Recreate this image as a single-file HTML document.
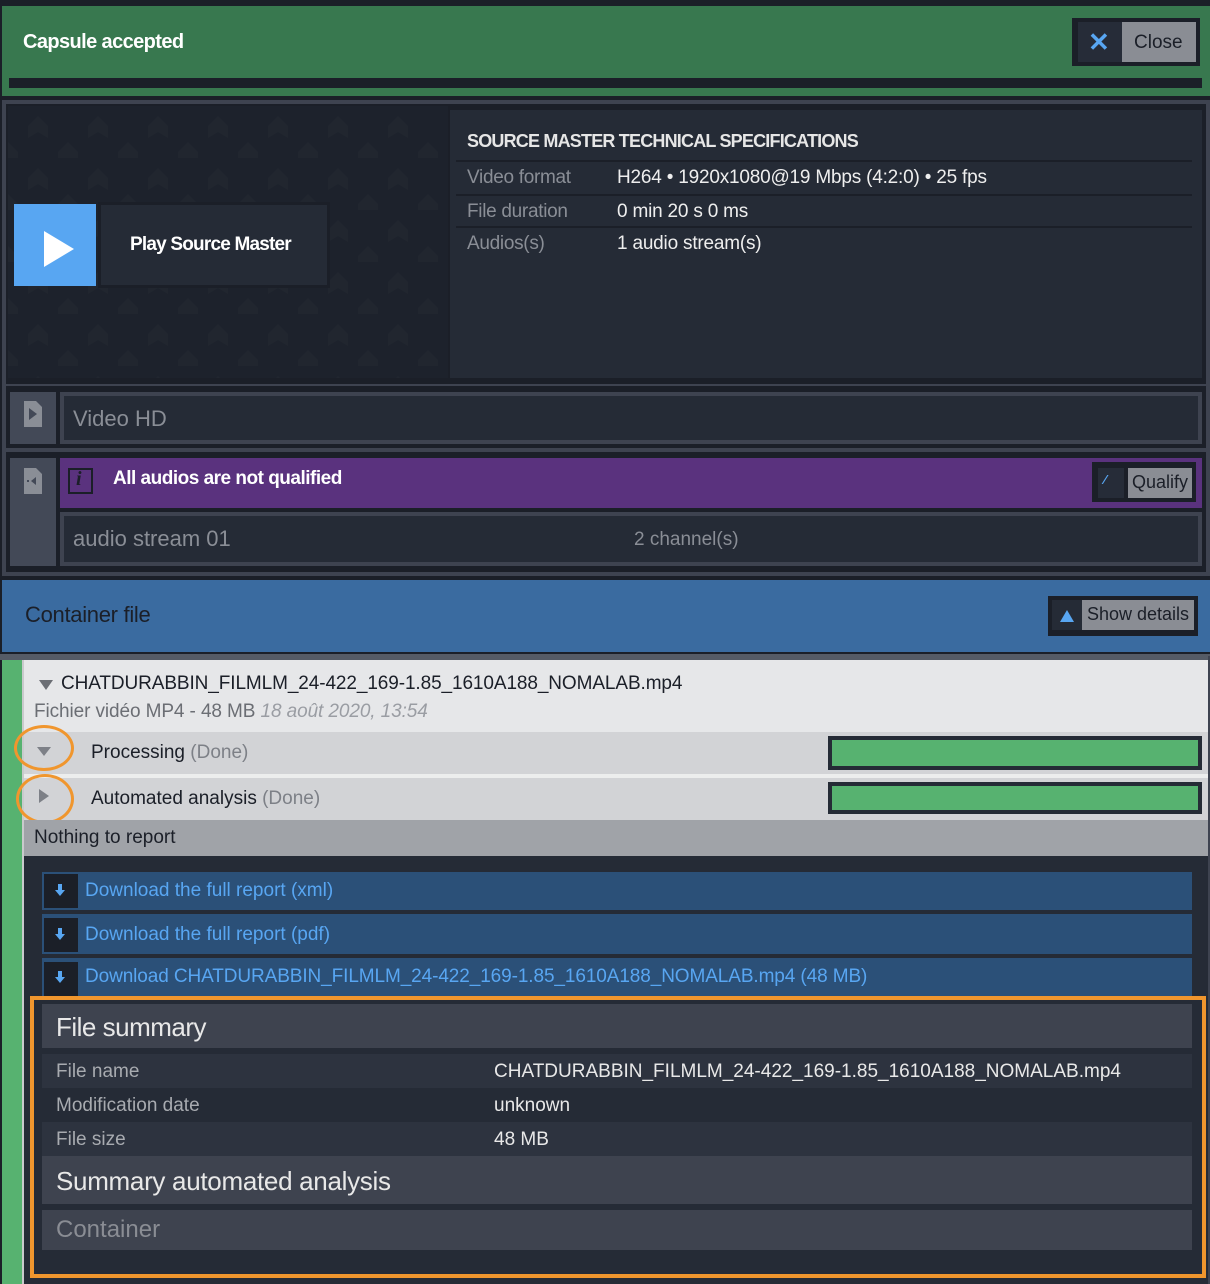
<!DOCTYPE html>
<html><head><meta charset="utf-8"><style>
*{margin:0;padding:0;box-sizing:border-box}
body{width:1210px;height:1284px;background:#1b1f28;position:relative;overflow:hidden;font-family:"Liberation Sans",sans-serif}
.a{position:absolute}
.t{position:absolute;white-space:nowrap}
</style></head><body>
<!-- header -->
<div class="a" style="left:2px;top:6px;width:1208px;height:90px;background:#38784f"></div>
<div class="a" style="left:9px;top:78px;width:1193px;height:10px;background:#1b1f28"></div>
<div class="t" style="left:23px;top:31px;font-size:20px;color:#fff;letter-spacing:-0.6px;font-weight:bold">Capsule accepted</div>
<div class="a" style="left:1072px;top:18px;width:128px;height:48px;background:#1b1f28"></div>
<div class="a" style="left:1078px;top:22px;width:44px;height:40px;background:#262c38"></div>
<div class="t" style="left:1088px;top:27px;font-size:26px;color:#58a6f2;font-weight:bold">✕</div>
<div class="a" style="left:1122px;top:22px;width:74px;height:40px;background:#8a8d94"></div>
<div class="t" style="left:1134px;top:32px;font-size:19px;color:#1b1f28">Close</div>

<!-- main panel -->
<div class="a" style="left:2px;top:100px;width:1208px;height:476px;background:#3e4350"></div>
<div class="a" style="left:6px;top:104px;width:1200px;height:280px;background:#1b1f28"></div>
<svg class="a" style="left:8px;top:106px" width="440" height="272">
<defs><pattern id="p" width="60" height="52" patternUnits="userSpaceOnUse">
<rect width="60" height="52" fill="#1d222c"/>
<path d="M30 10 L40 20 L40 32 L30 26 L20 32 L20 20Z M0 36 L10 46 L10 52 L0 52Z M60 36 L50 46 L50 52 L60 52Z" fill="#21262f"/>
</pattern></defs>
<rect width="440" height="272" fill="url(#p)"/></svg>
<div class="a" style="left:450px;top:110px;width:752px;height:268px;background:#252b36"></div>
<div class="a" style="left:14px;top:204px;width:82px;height:82px;background:#58a6f2"></div>
<svg class="a" style="left:42px;top:229px" width="34" height="40"><path d="M2 2 L32 20 L2 38Z" fill="#fff"/></svg>
<div class="a" style="left:98px;top:202px;width:232px;height:86px;background:#1b1f28"></div>
<div class="a" style="left:101px;top:205px;width:226px;height:80px;background:#252b36"></div>
<div class="t" style="left:130px;top:234px;font-size:19px;color:#fff;letter-spacing:-0.8px;font-weight:bold">Play Source Master</div>

<div class="t" style="left:467px;top:131px;font-size:18px;color:#e6e6e6;letter-spacing:-0.8px;font-weight:bold">SOURCE MASTER TECHNICAL SPECIFICATIONS</div>
<div class="a" style="left:456px;top:160px;width:736px;height:2px;background:#1b1f28"></div>
<div class="a" style="left:456px;top:194px;width:736px;height:2px;background:#1b1f28"></div>
<div class="a" style="left:456px;top:226px;width:736px;height:2px;background:#1b1f28"></div>
<div class="t" style="left:467px;top:167px;font-size:19px;color:#8a8e96;letter-spacing:-0.3px">Video format</div>
<div class="t" style="left:617px;top:167px;font-size:19px;color:#eee;letter-spacing:-0.2px">H264 • 1920x1080@19 Mbps (4:2:0) • 25 fps</div>
<div class="t" style="left:467px;top:201px;font-size:19px;color:#8a8e96;letter-spacing:-0.3px">File duration</div>
<div class="t" style="left:617px;top:201px;font-size:19px;color:#eee;letter-spacing:-0.2px">0 min 20 s 0 ms</div>
<div class="t" style="left:467px;top:233px;font-size:19px;color:#8a8e96;letter-spacing:-0.3px">Audios(s)</div>
<div class="t" style="left:617px;top:233px;font-size:19px;color:#eee;letter-spacing:-0.2px">1 audio stream(s)</div>

<!-- Video HD -->
<div class="a" style="left:6px;top:386px;width:1200px;height:62px;background:#1b1f28"></div>
<div class="a" style="left:10px;top:392px;width:46px;height:52px;background:#434957"></div>
<svg class="a" style="left:24px;top:401px" width="18" height="26"><path d="M0 0 H12 L18 6 V26 H0Z" fill="#8a8e96"/><path d="M5 7 L13 13 L5 19Z" fill="#434957"/></svg>
<div class="a" style="left:60px;top:392px;width:1142px;height:52px;background:#3e4350"></div>
<div class="a" style="left:64px;top:396px;width:1134px;height:44px;background:#252b36"></div>
<div class="t" style="left:73px;top:406px;font-size:22px;color:#8a8e96">Video HD</div>

<!-- audio -->
<div class="a" style="left:6px;top:452px;width:1200px;height:120px;background:#1b1f28"></div>
<div class="a" style="left:10px;top:458px;width:46px;height:108px;background:#434957"></div>
<svg class="a" style="left:24px;top:468px" width="18" height="26"><path d="M0 0 H12 L18 6 V26 H0Z" fill="#8a8e96"/><path d="M12 9 L7 13 L12 17Z M3 12h2v2h-2z" fill="#434957"/></svg>
<div class="a" style="left:60px;top:458px;width:1142px;height:50px;background:#5a327e"></div>
<div class="a" style="left:68px;top:468px;width:25px;height:26px;border:2px solid #1b1f28"></div>
<div class="t" style="left:76px;top:468px;font-size:20px;color:#1b1f28;font-family:'Liberation Serif',serif;font-style:italic;font-weight:bold">i</div>
<div class="t" style="left:113px;top:468px;font-size:19px;color:#fff;letter-spacing:-0.5px;font-weight:bold">All audios are not qualified</div>
<div class="a" style="left:1092px;top:462px;width:104px;height:40px;background:#1b1f28"></div>
<div class="a" style="left:1098px;top:468px;width:26px;height:30px;background:#262c38"></div>
<div class="t" style="left:1104px;top:472px;font-size:13px;color:#58a6f2;font-weight:bold">⁄</div>
<div class="a" style="left:1128px;top:468px;width:64px;height:30px;background:#8a8d94"></div>
<div class="t" style="left:1132px;top:472px;font-size:18px;color:#1b1f28">Qualify</div>
<div class="a" style="left:60px;top:512px;width:1142px;height:54px;background:#3e4350"></div>
<div class="a" style="left:64px;top:516px;width:1134px;height:46px;background:#252b36"></div>
<div class="t" style="left:73px;top:526px;font-size:22px;color:#8a8e96">audio stream 01</div>
<div class="t" style="left:634px;top:529px;font-size:19px;color:#8a8e96">2 channel(s)</div>

<!-- container header -->
<div class="a" style="left:2px;top:580px;width:1208px;height:72px;background:#3a6ba0"></div>
<div class="t" style="left:25px;top:602px;font-size:22px;color:#1b1f28;letter-spacing:-0.3px">Container file</div>
<div class="a" style="left:1048px;top:596px;width:150px;height:40px;background:#1b1f28"></div>
<div class="a" style="left:1052px;top:600px;width:30px;height:30px;background:#252b36"></div>
<svg class="a" style="left:1060px;top:610px" width="14" height="12"><path d="M7 0 L14 12 H0Z" fill="#58a6f2"/></svg>
<div class="a" style="left:1082px;top:600px;width:112px;height:30px;background:#8a8d94"></div>
<div class="t" style="left:1087px;top:604px;font-size:18px;color:#1b1f28">Show details</div>
<div class="a" style="left:0;top:654px;width:1210px;height:6px;background:#555b66"></div>

<!-- file area -->
<div class="a" style="left:2px;top:660px;width:20px;height:624px;background:#57b270"></div>
<div class="a" style="left:22px;top:660px;width:2px;height:624px;background:#c9cacc"></div>
<div class="a" style="left:24px;top:660px;width:1186px;height:72px;background:#e6e7e9"></div>
<svg class="a" style="left:39px;top:680px" width="14" height="10"><path d="M0 0 H14 L7 10Z" fill="#6b6e74"/></svg>
<div class="t" style="left:61px;top:673px;font-size:19px;color:#1b1f28;letter-spacing:-0.1px">CHATDURABBIN_FILMLM_24-422_169-1.85_1610A188_NOMALAB.mp4</div>
<div class="t" style="left:34px;top:701px;font-size:19px;color:#6b6e74;letter-spacing:-0.1px">Fichier vidéo MP4 - 48 MB <i style="color:#9a9da3">18 août 2020, 13:54</i></div>
<div class="a" style="left:24px;top:732px;width:1184px;height:42px;background:#d2d3d6"></div>
<div class="a" style="left:24px;top:774px;width:1184px;height:4px;background:#eceded"></div>
<div class="a" style="left:24px;top:778px;width:1184px;height:42px;background:#d2d3d6"></div>
<svg class="a" style="left:37px;top:747px" width="14" height="9"><path d="M0 0 H14 L7 9Z" fill="#7d8087"/></svg>
<svg class="a" style="left:39px;top:789px" width="10" height="14"><path d="M0 0 V14 L10 7Z" fill="#7d8087"/></svg>
<div class="t" style="left:91px;top:742px;font-size:19px;color:#1b1f28">Processing <span style="color:#7d8087">(Done)</span></div>
<div class="t" style="left:91px;top:788px;font-size:19px;color:#1b1f28">Automated analysis <span style="color:#7d8087">(Done)</span></div>
<div class="a" style="left:828px;top:736px;width:374px;height:34px;background:#252b36"></div>
<div class="a" style="left:832px;top:740px;width:366px;height:26px;background:#57b270"></div>
<div class="a" style="left:828px;top:782px;width:374px;height:32px;background:#252b36"></div>
<div class="a" style="left:832px;top:786px;width:366px;height:24px;background:#57b270"></div>
<div class="a" style="left:14px;top:725px;width:60px;height:46px;border:3px solid #f0962e;border-radius:50%"></div>
<div class="a" style="left:16px;top:774px;width:58px;height:50px;border:3px solid #f0962e;border-radius:50%"></div>
<div class="a" style="left:24px;top:820px;width:1184px;height:36px;background:#a0a3a8"></div>
<div class="t" style="left:34px;top:827px;font-size:19px;color:#1b1f28">Nothing to report</div>
<div class="a" style="left:24px;top:856px;width:1186px;height:428px;background:#252b36"></div>
<div class="a" style="left:1208px;top:656px;width:2px;height:628px;background:#3e4350"></div>

<div class="a" style="left:42px;top:872px;width:1150px;height:38px;background:#2b5078"></div>
<div class="a" style="left:44px;top:874px;width:34px;height:34px;background:#1b1f28"></div>
<div class="a" style="left:42px;top:914px;width:1150px;height:40px;background:#2b5078"></div>
<div class="a" style="left:44px;top:918px;width:34px;height:34px;background:#1b1f28"></div>
<div class="a" style="left:42px;top:958px;width:1150px;height:40px;background:#2b5078"></div>
<div class="a" style="left:44px;top:962px;width:34px;height:34px;background:#1b1f28"></div>
<svg class="a" style="left:55px;top:884px" width="10" height="12"><path d="M3 0h4v6h3L5 12 0 6h3z" fill="#58a6f2"/></svg>
<svg class="a" style="left:55px;top:928px" width="10" height="12"><path d="M3 0h4v6h3L5 12 0 6h3z" fill="#58a6f2"/></svg>
<svg class="a" style="left:55px;top:971px" width="10" height="12"><path d="M3 0h4v6h3L5 12 0 6h3z" fill="#58a6f2"/></svg>
<div class="t" style="left:85px;top:880px;font-size:19px;color:#58a6f2">Download the full report (xml)</div>
<div class="t" style="left:85px;top:924px;font-size:19px;color:#58a6f2">Download the full report (pdf)</div>
<div class="t" style="left:85px;top:966px;font-size:19px;color:#58a6f2;letter-spacing:-0.1px">Download CHATDURABBIN_FILMLM_24-422_169-1.85_1610A188_NOMALAB.mp4 (48 MB)</div>

<!-- summary -->
<div class="a" style="left:42px;top:1004px;width:1150px;height:44px;background:#3e434f"></div>
<div class="t" style="left:56px;top:1012px;font-size:26px;color:#e8e8e8;letter-spacing:-0.5px">File summary</div>
<div class="a" style="left:42px;top:1054px;width:1150px;height:34px;background:#2d333f"></div>
<div class="a" style="left:42px;top:1122px;width:1150px;height:34px;background:#2d333f"></div>
<div class="t" style="left:56px;top:1061px;font-size:19px;color:#a8abb0">File name</div>
<div class="t" style="left:494px;top:1061px;font-size:19px;color:#e8e8e8">CHATDURABBIN_FILMLM_24-422_169-1.85_1610A188_NOMALAB.mp4</div>
<div class="t" style="left:56px;top:1095px;font-size:19px;color:#a8abb0">Modification date</div>
<div class="t" style="left:494px;top:1095px;font-size:19px;color:#e8e8e8">unknown</div>
<div class="t" style="left:56px;top:1129px;font-size:19px;color:#a8abb0">File size</div>
<div class="t" style="left:494px;top:1129px;font-size:19px;color:#e8e8e8">48 MB</div>
<div class="a" style="left:42px;top:1156px;width:1150px;height:48px;background:#3e434f"></div>
<div class="t" style="left:56px;top:1166px;font-size:26px;color:#e8e8e8;letter-spacing:-0.3px">Summary automated analysis</div>
<div class="a" style="left:42px;top:1210px;width:1150px;height:40px;background:#3e434f"></div>
<div class="t" style="left:56px;top:1216px;font-size:24px;color:#8a8d94">Container</div>
<div class="a" style="left:30px;top:996px;width:1176px;height:282px;border:4px solid #f0962e"></div>
</body></html>
